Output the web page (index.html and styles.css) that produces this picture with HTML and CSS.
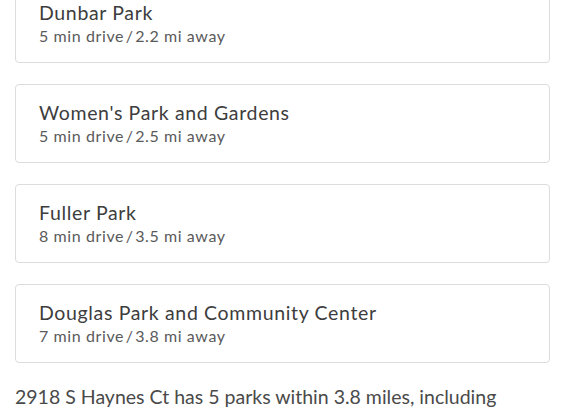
FILE: index.html
```html
<!DOCTYPE html>
<html lang="en">
<head>
    <meta charset="UTF-8">
    <meta name="viewport" content="width=device-width, initial-scale=1.0">
    <title>Nearby Parks</title>
    <link rel="stylesheet" href="styles.css">
</head>
<body>

    <!-- Park list -->
    <div class="park-list">
        <div class="park-card">
            <div class="park-name">Dunbar Park</div>
            <div class="park-distance">5 min drive&#8202;/&#8202;2.2 mi away</div>
        </div>
        <div class="park-card">
            <div class="park-name">Women's Park and Gardens</div>
            <div class="park-distance">5 min drive&#8202;/&#8202;2.5 mi away</div>
        </div>
        <div class="park-card">
            <div class="park-name">Fuller Park</div>
            <div class="park-distance">8 min drive&#8202;/&#8202;3.5 mi away</div>
        </div>
        <div class="park-card">
            <div class="park-name">Douglas Park and Community Center</div>
            <div class="park-distance">7 min drive&#8202;/&#8202;3.8 mi away</div>
        </div>
    </div>

    <!-- Summary -->
    <p class="summary">2918 S Haynes Ct has 5 parks within 3.8 miles, including</p>

</body>
</html>
```

FILE: styles.css
```css
body {
    margin: 0;
    padding: 0 14px 0 15px;
    font-family: Lato, "Open Sans", sans-serif;
    background: #fff;
    overflow: hidden;
}
.park-list {
    display: flex;
    flex-direction: column;
    gap: 21px;
    margin-top: -16px;
}
.park-card {
    border: 1px solid #dcdcdc;
    border-radius: 4px;
    height: 77px;
    padding: 0 23px;
    display: flex;
    flex-direction: column;
    justify-content: center;
}
.park-name {
    font-size: 19.5px;
    line-height: 24px;
    letter-spacing: 0.65px;
    color: #3d3d3d;
}
.park-distance {
    font-size: 16px;
    line-height: 22px;
    letter-spacing: 0.6px;
    color: #5a5a5a;
}
.summary {
    margin: 20px 0 0;
    font-size: 19.5px;
    line-height: 28px;
    color: #4a4a4a;
}
```
